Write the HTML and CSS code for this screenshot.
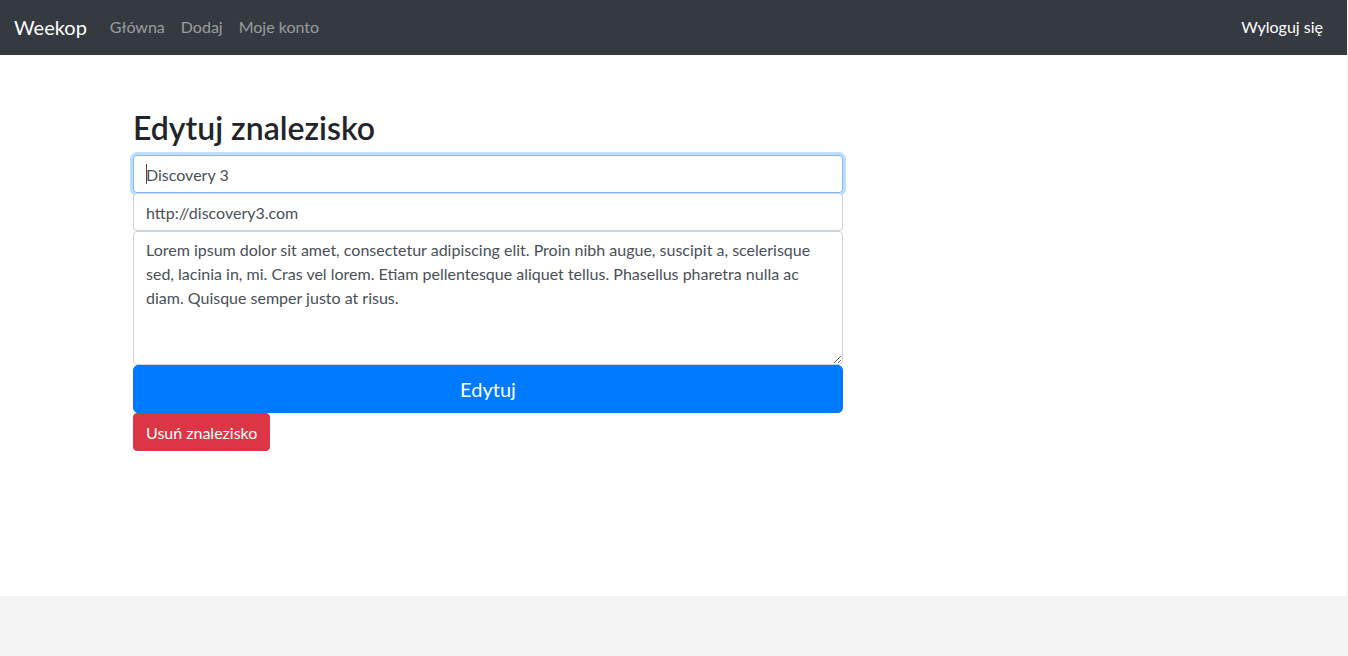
FILE: index.html
```html
<!DOCTYPE html>
<html lang="pl">
<head>
<meta charset="utf-8">
<title>Weekop - Edytuj znalezisko</title>
<link rel="stylesheet" href="styles.css">
</head>
<body>
<div class="page">
  <nav class="navbar">
    <a class="brand" href="#">Weekop</a>
    <ul class="nav">
      <li><a class="nav-link" href="#">Główna</a></li>
      <li><a class="nav-link" href="#">Dodaj</a></li>
      <li><a class="nav-link" href="#">Moje konto</a></li>
    </ul>
    <ul class="nav nav-right">
      <li><a class="nav-link active" href="#">Wyloguj się</a></li>
    </ul>
  </nav>
  <main class="content">
    <h2 class="title">Edytuj znalezisko</h2>
    <form class="form">
      <div class="field focused">
        <input class="control" type="text" value="Discovery 3">
      </div>
      <div class="field">
        <input class="control" type="text" value="http://discovery3.com">
      </div>
      <div class="field">
        <textarea class="control area" rows="5">Lorem ipsum dolor sit amet, consectetur adipiscing elit. Proin nibh augue, suscipit a, scelerisque sed, lacinia in, mi. Cras vel lorem. Etiam pellentesque aliquet tellus. Phasellus pharetra nulla ac diam. Quisque semper justo at risus.</textarea>
      </div>
      <button class="btn btn-primary" type="button">Edytuj</button>
    </form>
    <button class="btn btn-danger" type="button">Usuń znalezisko</button>
  </main>
</div>
</body>
</html>
```
FILE: styles.css
```css
html {
  background: #f3f3f3;
}
body {
  margin: 0;
  font-family: "Lato", "Noto Sans", sans-serif;
  font-size: 16px;
  line-height: 1.5;
  color: #212529;
}
.page {
  width: 1347px;
  height: 596px;
  background: #fff;
}
.navbar {
  height: 55px;
  box-sizing: border-box;
  background: #343a40;
  display: flex;
  align-items: center;
  padding: 0 16px 1px 14px;
}
.brand {
  color: #fff;
  text-decoration: none;
  font-size: 20px;
  margin-right: 15px;
}
.nav {
  list-style: none;
  margin: 0;
  padding: 0;
  display: flex;
}
.nav-right {
  margin-left: auto;
}
.nav-link {
  display: block;
  padding: 8px;
  color: rgba(255, 255, 255, 0.5);
  text-decoration: none;
  font-size: 16px;
}
.nav-link.active {
  color: #fff;
}
.content {
  width: 710px;
  padding: 54px 0 0 133px;
}
.title {
  margin: 0 0 8px;
  font-size: 32px;
  font-weight: 600;
  line-height: 1.2;
}
.form {
  margin: 0;
}
.field {
  position: relative;
}
.control {
  display: block;
  width: 100%;
  box-sizing: border-box;
  height: 38px;
  padding: 6px 12px;
  font-family: inherit;
  font-size: 16px;
  line-height: 1.5;
  color: #495057;
  background: #fff;
  border: 1px solid #ced4da;
  border-radius: 4px;
  margin: 0;
}
.focused .control {
  border-color: #80bdff;
  box-shadow: 0 0 0 3px rgba(0, 123, 255, 0.25);
  outline: 0;
}
.focused::after {
  content: "";
  position: absolute;
  left: 13px;
  top: 9px;
  width: 1px;
  height: 20px;
  background: #495057;
}
.area {
  height: 134px;
  resize: vertical;
}
.btn {
  display: block;
  border: 1px solid transparent;
  font-family: inherit;
  color: #fff;
  cursor: pointer;
}
.btn-primary {
  width: 100%;
  height: 48px;
  background: #007bff;
  border-color: #007bff;
  font-size: 20px;
  border-radius: 5px;
}
.btn-danger {
  height: 38px;
  padding: 0 12px;
  background: #dc3545;
  border-color: #dc3545;
  font-size: 16px;
  border-radius: 4px;
}
```
